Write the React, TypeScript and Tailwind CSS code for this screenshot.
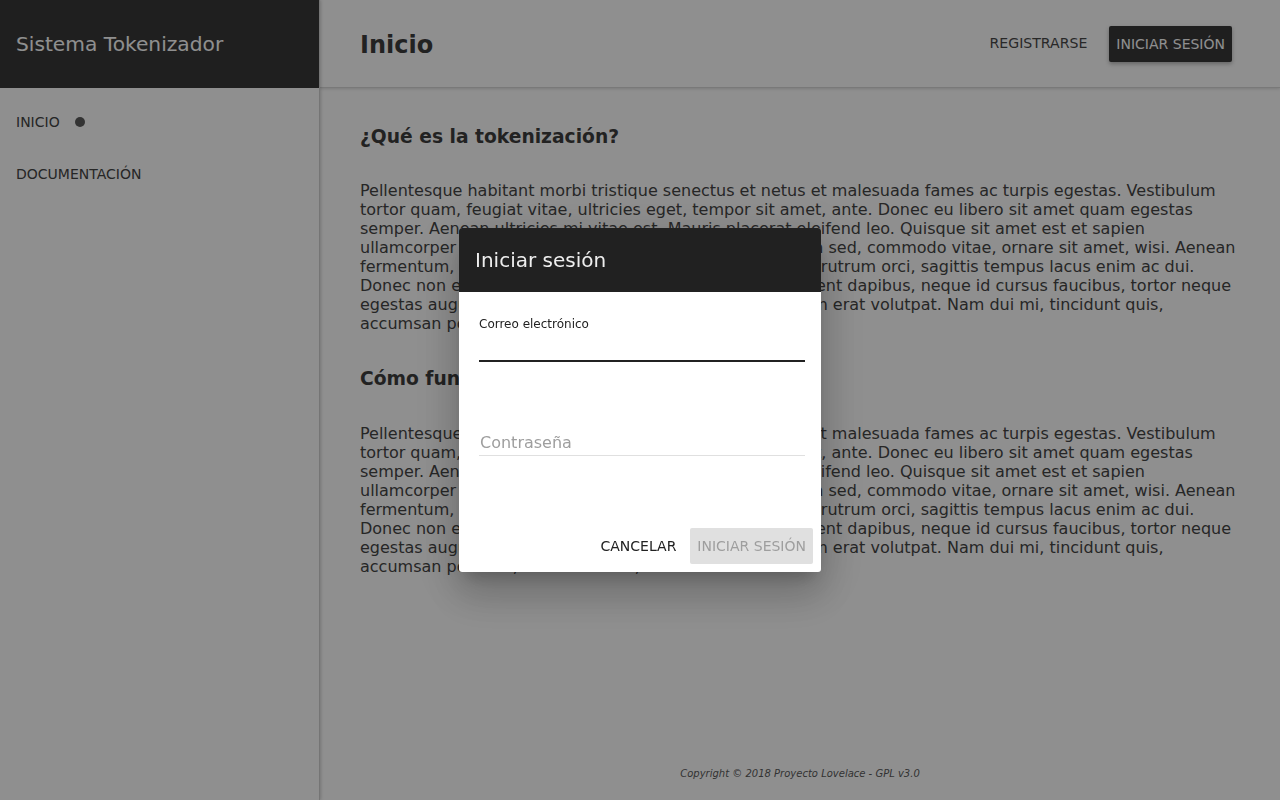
import { useState } from 'react';

const LOREM =
  'Pellentesque habitant morbi tristique senectus et netus et malesuada fames ac turpis egestas. Vestibulum tortor quam, feugiat vitae, ultricies eget, tempor sit amet, ante. Donec eu libero sit amet quam egestas semper. Aenean ultricies mi vitae est. Mauris placerat eleifend leo. Quisque sit amet est et sapien ullamcorper pharetra. Vestibulum erat wisi, condimentum sed, commodo vitae, ornare sit amet, wisi. Aenean fermentum, elit eget tincidunt condimentum, eros ipsum rutrum orci, sagittis tempus lacus enim ac dui. Donec non enim in turpis pulvinar facilisis. Ut felis. Praesent dapibus, neque id cursus faucibus, tortor neque egestas augue, eu vulputate magna eros eu erat. Aliquam erat volutpat. Nam dui mi, tincidunt quis, accumsan porttitor, facilisis luctus, metus';

const Sidebar = () => (
  <aside className="w-[320px] shrink-0 flex flex-col bg-white border-r border-[#d0d0d0] shadow-[1px_0_3px_rgba(0,0,0,0.18)] z-10">
    <div className="h-[88px] bg-[#383838] flex items-center px-4">
      <span className="text-white text-[20.2px]">Sistema Tokenizador</span>
    </div>
    <nav className="flex flex-col gap-1 pt-[10px]">
      <a className="h-12 flex items-center px-4 text-[14px] text-[#444] uppercase">
        Inicio
        <span className="ml-[15px] w-[10px] h-[10px] rounded-full bg-[#5b5b5b]" />
      </a>
      <a className="h-12 flex items-center px-4 text-[14px] text-[#444] uppercase">Documentación</a>
    </nav>
  </aside>
);

const Header = ({ onLogin }: { onLogin: () => void }) => (
  <header className="h-[88px] shrink-0 flex items-center justify-between pl-10 pr-12 pt-[1px] bg-white border-b border-[#d8d8d8] shadow-[0_1px_3px_rgba(0,0,0,0.15)]">
    <h1 className="text-[24px] font-bold text-[#3d3d3d] mt-px">Inicio</h1>
    <div className="flex items-center gap-[8px]">
      <button className="h-9 px-[14px] text-[14.1px] text-[#484848] uppercase">Registrarse</button>
      <button
        onClick={onLogin}
        className="h-9 px-[7px] rounded-[2px] bg-[#383838] text-white text-[14px] uppercase shadow-[0_2px_4px_rgba(0,0,0,0.3)]"
      >
        Iniciar sesión
      </button>
    </div>
  </header>
);

const LoginDialog = ({ onClose }: { onClose: () => void }) => (
  <div className="fixed inset-0 z-50 flex items-center justify-center bg-black/[0.44]">
    <div className="w-[362px] h-[344px] flex flex-col bg-white rounded-[3px] overflow-hidden shadow-[0_11px_15px_-7px_rgba(0,0,0,0.2),0_24px_38px_3px_rgba(0,0,0,0.14),0_9px_46px_8px_rgba(0,0,0,0.12)]">
      <div className="h-16 shrink-0 bg-[#212121] flex items-center px-4">
        <h2 className="text-[20px] text-[#eeeeee]">Iniciar sesión</h2>
      </div>
      <div className="flex-1 flex flex-col pl-5 pr-4 pt-[25px]">
        <label className="text-[12px] text-[#222] leading-[15px]">Correo electrónico</label>
        <div className="mt-[28px] h-[2px] bg-[#212121]" />
        <div className="mt-[71px] text-[16px] text-[#9e9e9e] leading-[19px] pl-px">Contraseña</div>
        <div className="mt-[3px] h-px bg-[#e0e0e0]" />
      </div>
      <div className="flex justify-end items-center gap-[6px] pr-2 pb-2">
        <button onClick={onClose} className="h-9 px-2 text-[14px] text-[#222] uppercase">
          Cancelar
        </button>
        <button disabled className="h-9 px-[7px] rounded-[2px] bg-[#e0e0e0] text-[14px] text-[#9e9e9e] uppercase">
          Iniciar sesión
        </button>
      </div>
    </div>
  </div>
);

export default function App() {
  const [open, setOpen] = useState(true);
  return (
    <div className="h-[800px] w-[1280px] flex bg-white font-['DejaVu_Sans',sans-serif] overflow-hidden">
      <Sidebar />
      <main className="flex-1 flex flex-col min-w-0">
        <Header onLogin={() => setOpen(true)} />
        <section className="flex-1 px-10 pt-[37px] text-[#454545]">
          <h2 className="text-[18.7px] leading-[24px] font-bold mb-[32px] text-[#3d3d3d]">¿Qué es la tokenización?</h2>
          <p className="text-[16px] leading-[19px] mb-[34px]">{LOREM}</p>
          <h2 className="text-[18.7px] leading-[24px] font-bold mb-[33px] text-[#3d3d3d]">Cómo funciona</h2>
          <p className="text-[16px] leading-[19px]">{LOREM}</p>
        </section>
        <footer className="h-[52px] flex items-start justify-center pt-[20px]">
          <span className="text-[10px] leading-[12px] italic text-[#5b5b5b]">Copyright © 2018 Proyecto Lovelace - GPL v3.0</span>
        </footer>
      </main>
      {open && <LoginDialog onClose={() => setOpen(false)} />}
    </div>
  );
}
